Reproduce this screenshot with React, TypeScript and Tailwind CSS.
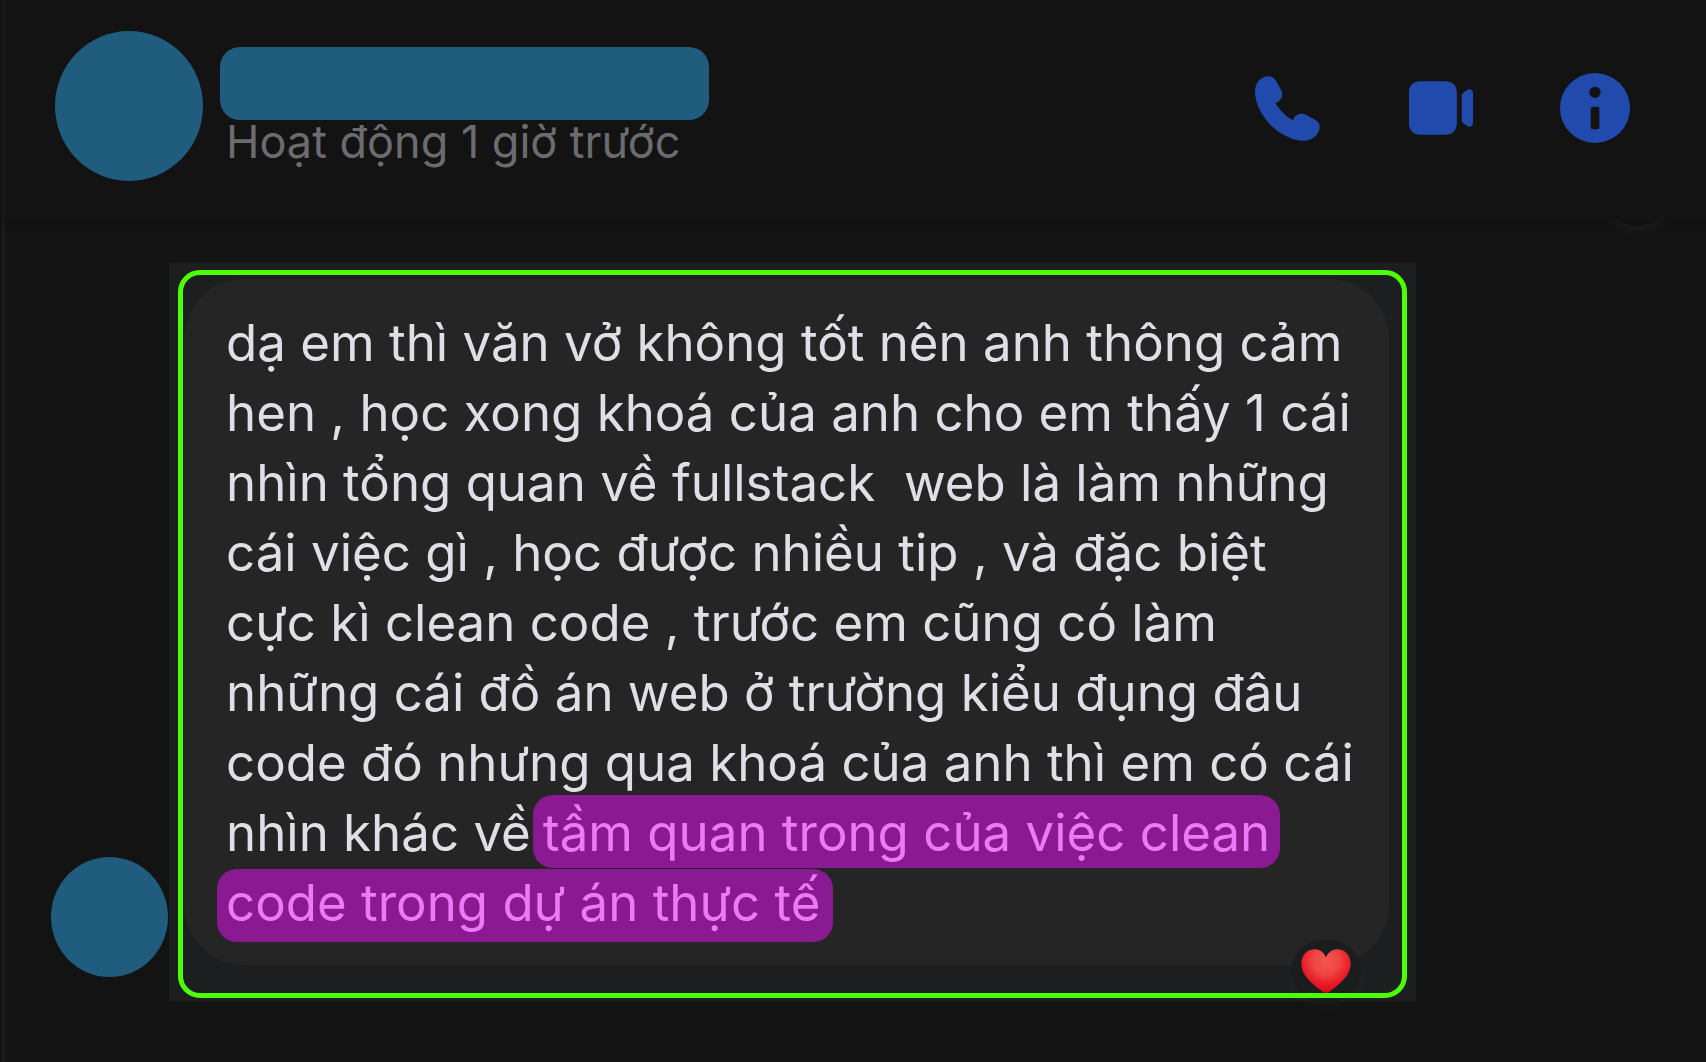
import React from 'react';

const messageLines: string[] = [
  'dạ em thì văn vở không tốt nên anh thông cảm',
  'hen , học xong khoá của anh cho em thấy 1 cái',
  'nhìn tổng quan về fullstack  web là làm những',
  'cái việc gì , học được nhiều tip , và đặc biệt',
  'cực kì clean code , trước em cũng có làm',
  'những cái đồ án web ở trường kiểu đụng đâu',
  'code đó nhưng qua khoá của anh thì em có cái',
];

const PhoneIcon: React.FC = () => (
  <svg viewBox="0 0 195 195" className="w-[65px] h-[65px]" fill="currentColor" aria-hidden="true">
    <path d="M40 1C17 1 0 22 0 47C0 86 25 126 52 152C81 177 116 195 147 194C174 193 194 173 194 152C194 143 189 137 181 132L155 117C142 110 128 113 119 122L114 133C93 121 73 102 61 81C75 77 84 64 81 48C79 42 76 37 73 32L63 14C58 6 50 1 40 1Z" />
  </svg>
);

const VideoIcon: React.FC = () => (
  <svg viewBox="0 0 194 162" className="w-16 h-[54px]" fill="currentColor" aria-hidden="true">
    <rect x="0" y="0" width="145" height="162" rx="32" />
    <path d="M160 44C160 40 162 37 166 34L175 27C184 21 194 25 194 36V126C194 137 184 141 175 135L166 128C162 125 160 122 160 118Z" />
  </svg>
);

const InfoIcon: React.FC = () => (
  <svg viewBox="0 0 210 210" className="w-[70px] h-[70px]" aria-hidden="true">
    <circle cx="105" cy="105" r="105" fill="currentColor" />
    <circle cx="105" cy="58" r="17" fill="#131313" />
    <rect x="92" y="101" width="26" height="68" rx="6" fill="#131313" />
  </svg>
);

const HeartIcon: React.FC = () => (
  <svg viewBox="0 0 150 132" className="w-[50px] h-11" aria-hidden="true">
    <defs>
      <radialGradient id="heart" gradientUnits="userSpaceOnUse" cx="75" cy="36" r="98">
        <stop offset="0" stopColor="#f4564f" />
        <stop offset="0.4" stopColor="#f04643" />
        <stop offset="0.72" stopColor="#e91c27" />
        <stop offset="1" stopColor="#d40212" />
      </radialGradient>
    </defs>
    <path
      fill="url(#heart)"
      d="M75 25C68 9 56 1 42 1C18 1 1 19 1 45C1 80 36 106 63 127C71 133 79 133 87 127C114 106 149 80 149 45C149 19 132 1 108 1C94 1 82 9 75 25Z"
    />
  </svg>
);

const ChatHeader: React.FC = () => (
  <header className="relative z-10 flex h-[220px] items-start justify-between bg-[#131313] pl-[50px] pr-[76px] shadow-[0_2px_8px_#10111480]">
    <div className="flex items-start">
      <div className="mt-[31px] h-[150px] w-[148px] rounded-[50%] bg-[#1f5c7d]" />
      <div className="ml-[17px] mt-[47px]">
        <div className="h-[73px] w-[489px] rounded-[20px] bg-[#1f5c7d]" />
        <p className="pl-1.5 text-[45px] leading-[44px] text-[#6c6b70]">Hoạt động 1 giờ trước</p>
      </div>
    </div>

    <div className="mt-[73px] flex h-[70px] items-center text-[#204bad]">
      <button type="button" aria-label="Gọi thoại">
        <PhoneIcon />
      </button>
      <button type="button" aria-label="Gọi video" className="ml-[89px]">
        <VideoIcon />
      </button>
      <button type="button" aria-label="Thông tin" className="ml-[87px]">
        <InfoIcon />
      </button>
    </div>
  </header>
);

const Message: React.FC = () => (
  <div className="flex items-end pl-[46px] pr-[290px] pt-[43px]">
    <div className="mb-6 mr-px h-[120px] w-[117px] shrink-0 rounded-[50%] bg-[#1f5c7d]" />

    <div className="relative min-w-0 flex-1 bg-[#1c1e20] pb-9 pl-[15px] pr-[27px] pt-4">
      <div className="rounded-[60px] bg-[#252525] pb-[27px] pl-[42px] pt-[29px]">
        <p className="whitespace-pre text-[51px] leading-[70px] text-[#e1dfe6]">
          {messageLines.map((line) => (
            <span key={line} className="block">
              {line}
            </span>
          ))}
          <span className="flex">
            nhìn khác về
            <mark className="-mt-[3px] ml-0.5 rounded-[20px] bg-[#8a1a91] px-[10px] pt-[3px] text-[#ec79f5]">
              tầm quan trong của việc clean
            </mark>
          </span>
          <span className="flex">
            <mark className="-mb-1 -ml-[9px] mt-px rounded-[20px] bg-[#8a1a91] pb-[5px] pl-[9px] pr-3 leading-[68px] text-[#ec79f5]">
              code trong dự án thực tế
            </mark>
          </span>
        </p>
      </div>

      {/* Reaction badge */}
      <div className="absolute -bottom-px right-[55px] flex h-[62px] w-[70px] items-center justify-center rounded-full bg-[#1b1c1e] shadow-[0_4px_16px_#ffffff08]">
        <HeartIcon />
      </div>

      {/* Selection outline */}
      <div className="pointer-events-none absolute bottom-[3px] left-[9px] right-[9px] top-[7px] rounded-[22px] border-[5px] border-[#4cff08]" />
    </div>
  </div>
);

const App: React.FC = () => {
  return (
    <div className="min-h-screen overflow-hidden bg-[#131313] pl-0.5 font-['Inter','Noto_Sans',sans-serif]">
      <div className="relative min-h-screen border-l-[3px] border-[#1b1b1b]">
        <ChatHeader />
        {/* Reaction of the previous message, scrolled under the header */}
        <div className="absolute right-[34px] top-[156px] h-[70px] w-[70px] rounded-full bg-[#131313] shadow-[0_6px_14px_#ffffff0c]" />
        <main>
          <Message />
        </main>
      </div>
    </div>
  );
};

export default App;
